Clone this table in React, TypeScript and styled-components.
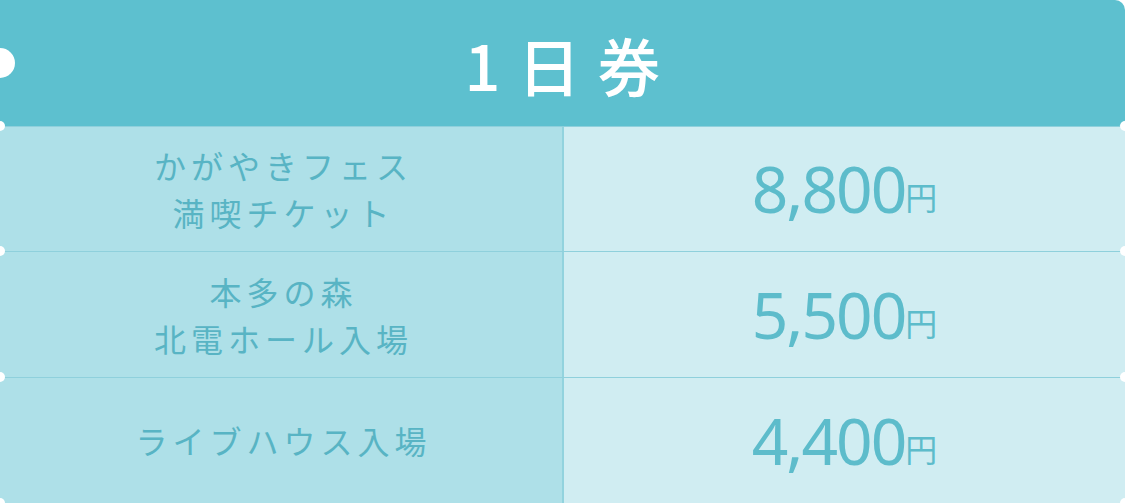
import React from 'react';
import styled, { createGlobalStyle } from 'styled-components';

const GlobalStyle = createGlobalStyle`
  html, body {
    margin: 0;
    padding: 0;
    background: #ffffff;
  }
  body {
    font-family: "Noto Sans CJK JP", "Noto Sans", sans-serif;
  }
`;

const Ticket = styled.div`
  width: 1125px;
  height: 503px;
  overflow: hidden;
  display: flex;
  flex-direction: column;
`;

// punched holes on the ticket edge
const hole = (r: number) => `
  content: '';
  position: absolute;
  width: ${r * 2}px;
  height: ${r * 2}px;
  border-radius: 50%;
  background: #ffffff;
  z-index: 2;
`;

const Header = styled.div`
  position: relative;
  height: 126px;
  flex-shrink: 0;
  background: #5dc0cf;
  border-radius: 0 10px 6px 0;
  display: flex;
  align-items: center;
  justify-content: center;

  &::before {
    ${hole(15)}
    left: -15px;
    top: 48px;
  }
`;

const HeaderTitle = styled.h1`
  margin: 0;
  color: #ffffff;
  font-size: 63px;
  font-weight: 500;
  letter-spacing: 17px;
  padding-left: 17px;
  line-height: 1;
`;

const Row = styled.div<{ $h: number }>`
  position: relative;
  height: ${(p) => p.$h}px;
  display: grid;
  grid-template-columns: 562px 2px 1fr;
  border-top: 1px solid #8fd0dc;
  box-sizing: border-box;

  &::before,
  &::after {
    ${hole(5)}
    top: -6px;
  }
  &::before {
    left: -5px;
  }
  &::after {
    right: -5px;
  }
`;

const Label = styled.div`
  background: #aee0e8;
  display: flex;
  flex-direction: column;
  align-items: center;
  justify-content: center;
  text-align: center;
  color: #58b4c4;
  font-size: 32px;
  line-height: 47px;
  letter-spacing: 5px;
  padding-left: 5px;
`;

const Divider = styled.div`
  background: #92d3de;
`;

const PriceCell = styled.div`
  background: #d0edf2;
  display: flex;
  align-items: center;
  justify-content: center;
  color: #5dbccb;
`;

const Amount = styled.span`
  font-family: "Noto Sans", "Open Sans", sans-serif;
  font-size: 64px;
  letter-spacing: -2px;
  line-height: 1;
`;

const Yen = styled.span`
  font-size: 32px;
  margin-top: 14px;
`;

const Footer = styled.div`
  position: relative;
  height: 0;

  &::before,
  &::after {
    ${hole(5)}
    top: -5px;
  }
  &::before {
    left: -5px;
  }
  &::after {
    right: -5px;
  }
`;

const rows = [
  { label: ['かがやきフェス', '満喫チケット'], price: '8,800', h: 125 },
  { label: ['本多の森', '北電ホール入場'], price: '5,500', h: 126 },
  { label: ['ライブハウス入場'], price: '4,400', h: 126 },
];

const App: React.FC = () => {
  return (
    <>
      <GlobalStyle />
      <Ticket>
        <Header>
          <HeaderTitle>1日券</HeaderTitle>
        </Header>
        {rows.map((row) => (
          <Row key={row.price} $h={row.h}>
            <Label>
              {row.label.map((line) => (
                <div key={line}>{line}</div>
              ))}
            </Label>
            <Divider />
            <PriceCell>
              <Amount>{row.price}</Amount>
              <Yen>円</Yen>
            </PriceCell>
          </Row>
        ))}
        <Footer />
      </Ticket>
    </>
  );
};

export default App;
